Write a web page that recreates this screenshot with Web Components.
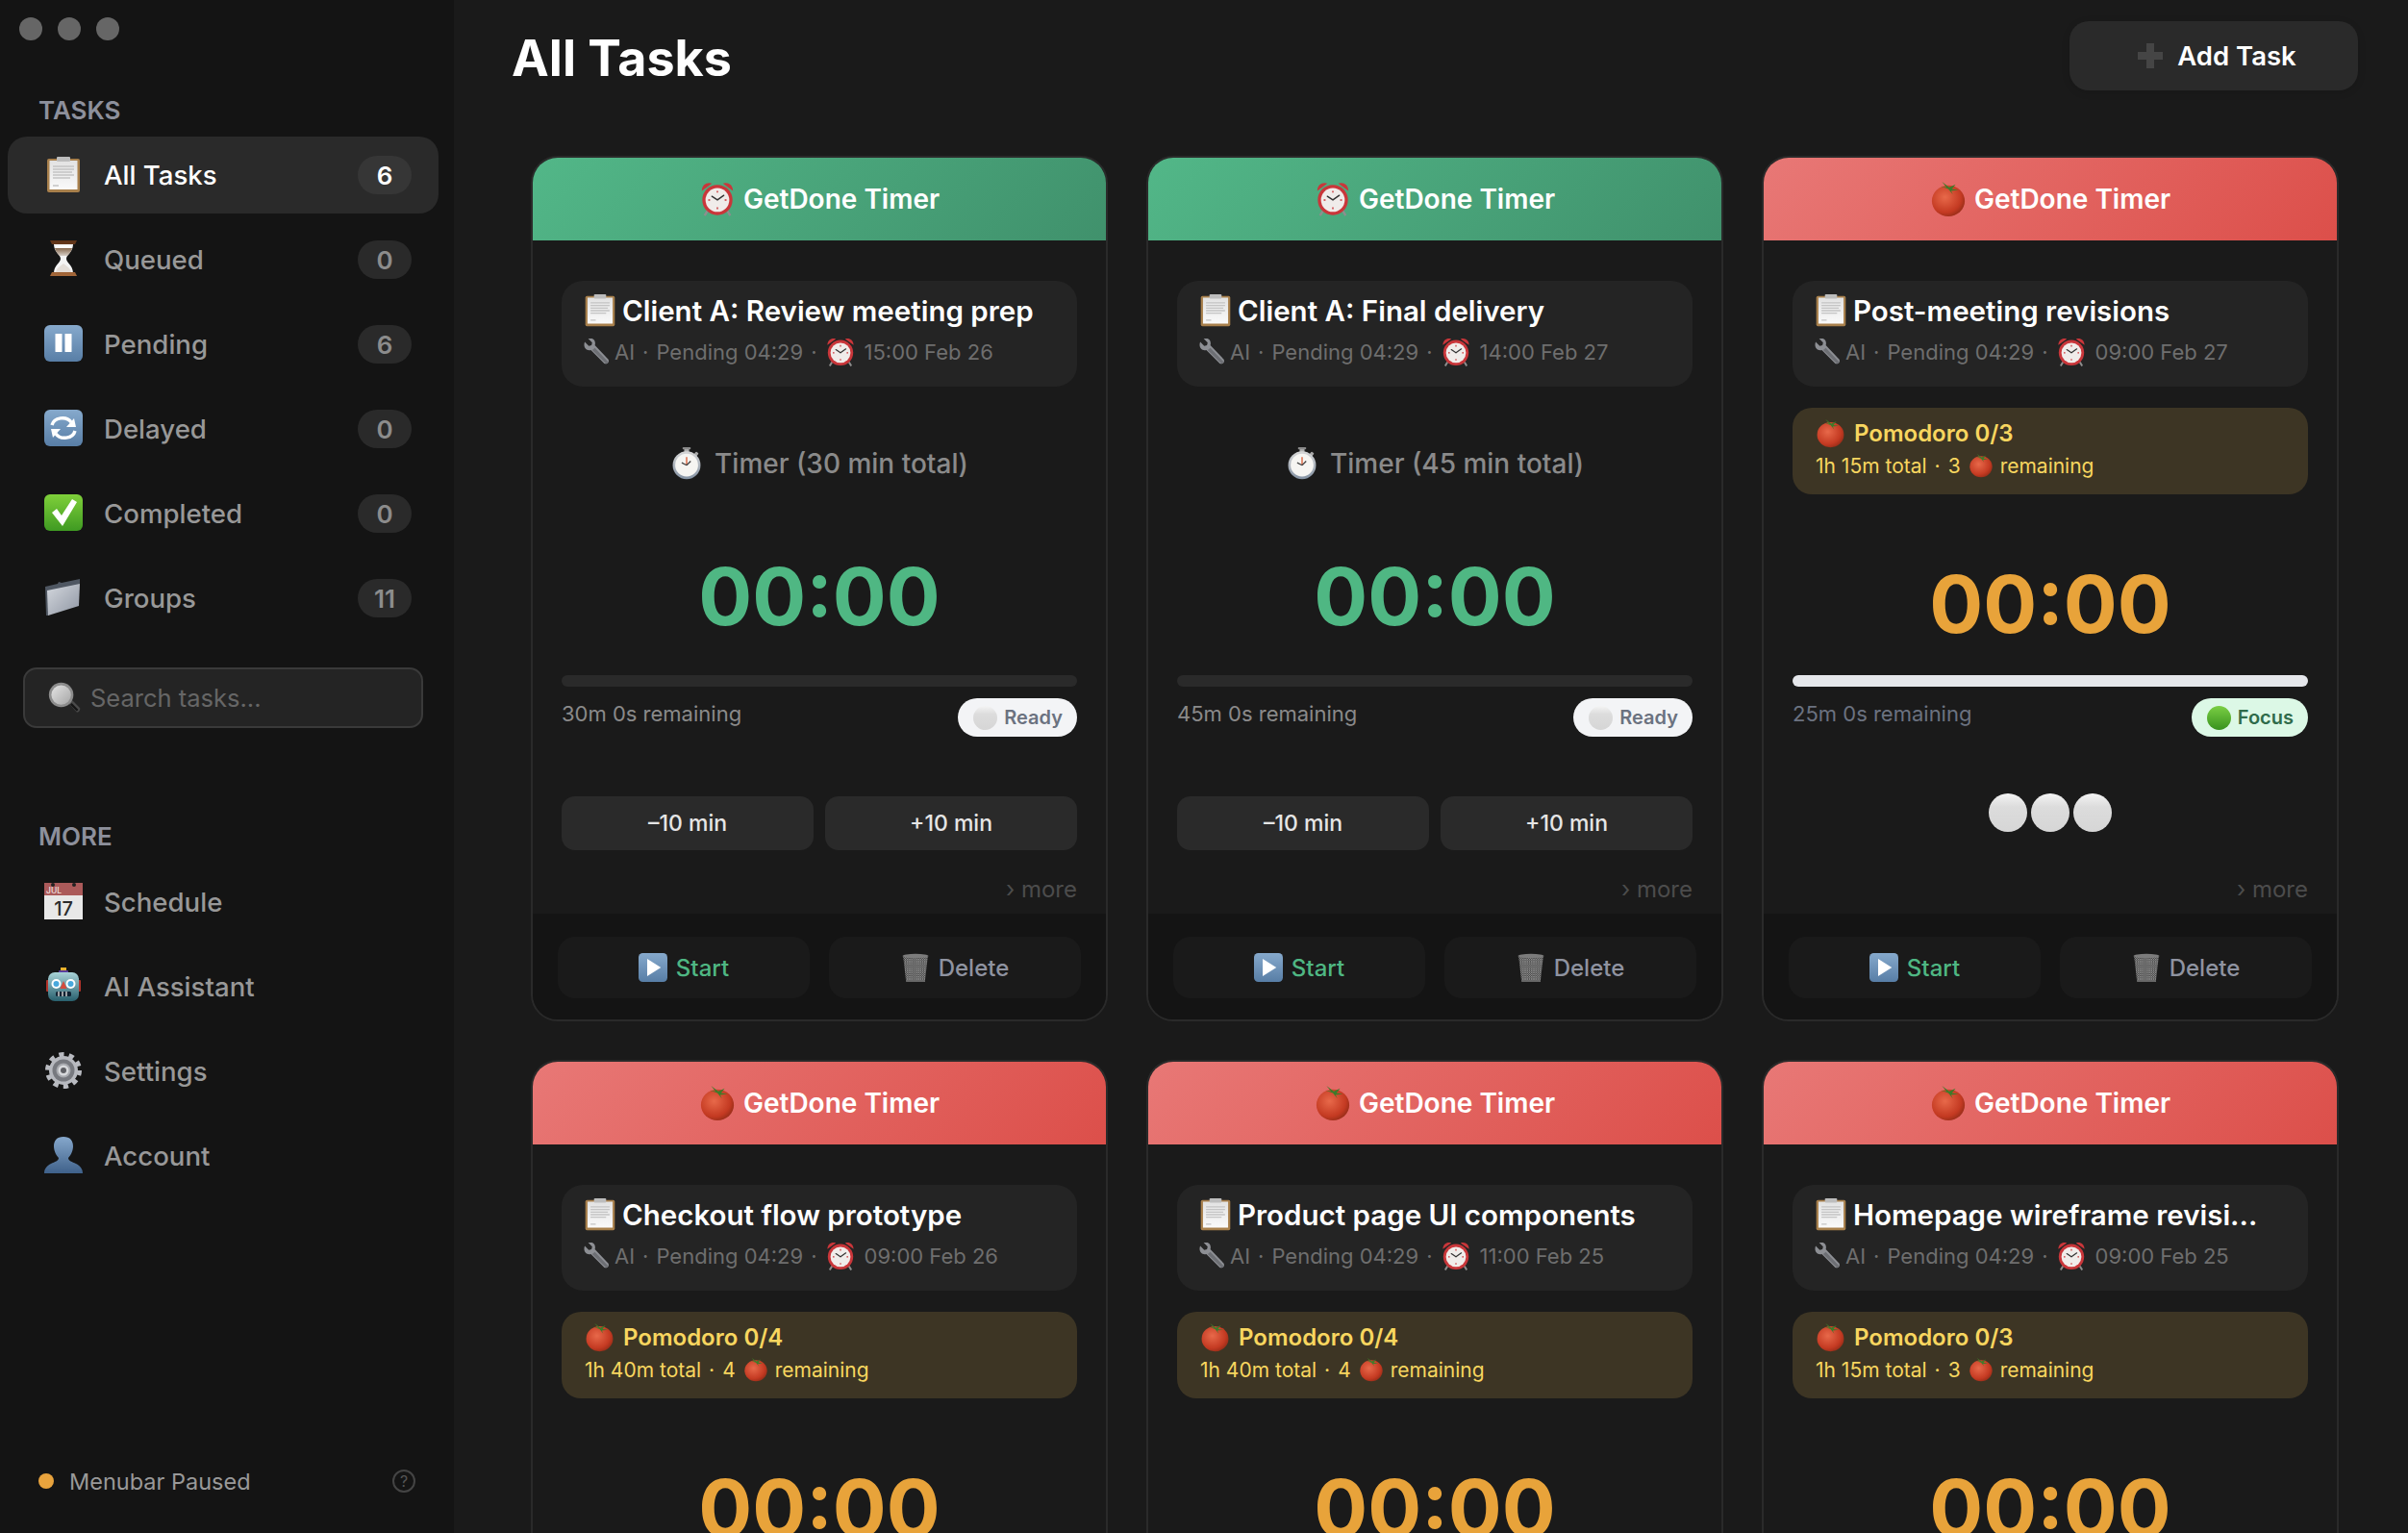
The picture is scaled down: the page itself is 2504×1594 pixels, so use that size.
<!DOCTYPE html>
<html lang="en">
<head>
<meta charset="utf-8">
<title>All Tasks</title>
<style>
  html,body{margin:0;height:100%;background:#1a1a1a;overflow:hidden}
  body{font-family:Inter,"Noto Sans","Liberation Sans",sans-serif;color:#fff}
</style>
</head>
<body>
<task-app></task-app>

<script>
// every icon is drawn on a 40x40 box
const ICONS = {
  clipboard:`<defs><linearGradient id="p" x1="0" y1="0" x2="0" y2="1"><stop offset="0" stop-color="#e2e2e2"/><stop offset="1" stop-color="#fafafa"/></linearGradient></defs>
    <rect x="3" y="3" width="34" height="35" rx="2" fill="#a8804c"/>
    <rect x="5.500" y="5" width="29" height="30" fill="url(#p)"/>
    <rect x="13" y="1" width="14" height="5" rx="1" fill="#bdbdbd"/>
    <path d="M9 11h22M9 14h22M9 17h20M9 20h22M9 23h18M9 31h6" stroke="#c4c4c4" stroke-width="1.400"/>`,
  hourglass:`<defs><linearGradient id="c" x1="0" y1="0" x2="0" y2="1"><stop offset="0" stop-color="#5e3318"/><stop offset="1" stop-color="#a5683a"/></linearGradient>
    <linearGradient id="sa" x1="0" y1="0" x2="0" y2="1"><stop offset="0" stop-color="#86684e"/><stop offset="1" stop-color="#d8d0c8"/></linearGradient></defs>
    <path d="M10 4h20c0 8-7 11-7 15s7 7 7 15H10c0-8 7-11 7-15s-7-7-7-15z" fill="#f4f4f4"/>
    <path d="M11 8h18c-1 4-3 6-5 8H16c-2-2-4-4-5-8z" fill="url(#sa)"/>
    <path d="M12 5.500h16v2.500H12z" fill="#fff"/>
    <path d="M12 33c1-5 6-7 8-9 2 2 7 4 8 9z" fill="#e4ded8"/>
    <path d="M6 0h28l-2 4H8zM6 37h28l-2-4H8z" fill="url(#c)"/>`,
  pause:`<defs><linearGradient id="b" x1="0" y1="0" x2="0" y2="1"><stop offset="0" stop-color="#86a9cc"/><stop offset="1" stop-color="#587ea6"/></linearGradient></defs>
    <rect width="40" height="38" y="0" rx="6" fill="url(#b)"/>
    <rect x="11.500" y="9" width="7" height="19" rx=".5" fill="#fff"/><rect x="21.500" y="9" width="7" height="19" rx=".5" fill="#fff"/>`,
  cycle:`<defs><linearGradient id="b" x1="0" y1="0" x2="0" y2="1"><stop offset="0" stop-color="#86a9cc"/><stop offset="1" stop-color="#587ea6"/></linearGradient></defs>
    <rect width="40" height="38" rx="6" fill="url(#b)"/>
    <path d="M8 16c2-8 15-10 20-3" fill="none" stroke="#fff" stroke-width="3.400"/>
    <path d="M33 18H23l8-9z" fill="#fff"/>
    <path d="M32 22c-2 8-15 10-20 3" fill="none" stroke="#fff" stroke-width="3.400"/>
    <path d="M7 20h10l-8 9z" fill="#fff"/>`,
  check:`<defs><linearGradient id="g" x1="0" y1="0" x2="0" y2="1"><stop offset="0" stop-color="#7fd03a"/><stop offset="1" stop-color="#3f9a22"/></linearGradient></defs>
    <rect width="40" height="38" rx="6" fill="url(#g)"/>
    <path d="M8 19l5-4 5 7L29 5l5 3-15 25z" fill="#fff"/>`,
  folder:`<defs><linearGradient id="f" x1="0" y1="0" x2="1" y2="1"><stop offset="0" stop-color="#d4d8de"/><stop offset="1" stop-color="#8f96a3"/></linearGradient></defs>
    <path d="M1 8l13-3 1-2 3 1 19-4v5L4 38H2z" fill="#4f5762"/>
    <path d="M3 12l34-7-1 23L4 38z" fill="url(#f)"/>`,
  search:`<defs><linearGradient id="l" x1="0" y1="0" x2="1" y2="1"><stop offset="0" stop-color="#e4e4e4"/><stop offset="1" stop-color="#a5a5a5"/></linearGradient></defs>
    <path d="M24 25l4-4 11 11c1 2-2 6-4 5z" fill="#4a4a4a"/>
    <path d="M29 26l8 8-2 2-8-8z" fill="#151515"/>
    <circle cx="16" cy="16" r="15" fill="#8c8c8c"/>
    <circle cx="16" cy="16" r="12" fill="url(#l)"/>`,
  calendar:`<rect y="0" width="40" height="38" fill="#e8e8e8"/>
    <rect width="40" height="13" fill="#ab5a5a"/>
    <circle cx="9" cy="2" r="2" fill="#222"/><circle cx="31" cy="2" r="2" fill="#222"/>
    <text x="2" y="11" font-size="8.500" font-weight="500" fill="#f0e0e0" font-family="Inter,sans-serif">JUL</text>
    <text x="20" y="33.500" text-anchor="middle" font-size="20" fill="#2c2c2c" font-family="Inter,sans-serif">17</text>`,
  robot:`<defs><linearGradient id="r" x1="0" y1="0" x2="0" y2="1"><stop offset="0" stop-color="#a9d3d8"/><stop offset="1" stop-color="#28606e"/></linearGradient></defs>
    <rect x="17" y="0" width="6" height="3" fill="#eab12e"/><rect x="15" y="3" width="10" height="3" rx="1" fill="#5a3f9c"/>
    <rect x="2" y="13" width="4" height="12" rx="1" fill="#b2332a"/><rect x="34" y="13" width="4" height="12" rx="1" fill="#b2332a"/>
    <rect x="4" y="5" width="32" height="30" rx="7" fill="url(#r)"/>
    <circle cx="12.500" cy="17" r="5" fill="#fff"/><circle cx="12.500" cy="17" r="3" fill="#48a8dd"/>
    <circle cx="27.500" cy="17" r="5" fill="#fff"/><circle cx="27.500" cy="17" r="3" fill="#48a8dd"/>
    <path d="M20 14l3.500 8h-7z" fill="#d64a3c"/>
    <rect x="12" y="25" width="16" height="5" rx="1.500" fill="#123"/>
    <path d="M15 25v5M19 25v5M23 25v5" stroke="#ccc" stroke-width="1.500"/>`,
  gear:`<circle cx="20" cy="19" r="16.500" fill="none" stroke="#b9bbc1" stroke-width="5" stroke-dasharray="5.200 5.170"/>
    <circle cx="20" cy="19" r="15" fill="#b7b9bf"/><circle cx="20" cy="19" r="11.500" fill="#77797f"/>
    <circle cx="20" cy="19" r="7.500" fill="#a7a9ae"/><circle cx="20" cy="19" r="5.500" fill="#d8d9dc"/><circle cx="20" cy="19" r="3" fill="#5f6065"/>`,
  person:`<defs><linearGradient id="u" x1="0" y1="0" x2="0" y2="1"><stop offset="0" stop-color="#86a8cc"/><stop offset="1" stop-color="#3f618a"/></linearGradient></defs>
    <path d="M20 0c7 0 10 4 10 10 0 5-3 10-5 12 0 3 4 4 8 6s7 5 7 10H0c0-5 3-8 7-10s8-3 8-6c-2-2-5-7-5-12C10 4 13 0 20 0z" fill="url(#u)"/>`,
  alarm:`<path d="M3 11C3 4 9 1 14 3zM37 11c0-7-6-10-11-8z" fill="#c9363a"/>
    <path d="M9 33l-3 5M31 33l3 5" stroke="#8e8e8e" stroke-width="2.500"/>
    <circle cx="20" cy="21" r="16.500" fill="#c9363a"/><circle cx="20" cy="21" r="13" fill="#f0ecea"/>
    <path d="M20 11v2M20 29v2M10 21h2M28 21h2" stroke="#c9363a" stroke-width="1.500"/>
    <path d="M20 21l-6-4M20 21l7-5" stroke="#333" stroke-width="1.500" stroke-linecap="round"/>`,
  stopwatch:`<defs><linearGradient id="s" x1="0" y1="0" x2="0" y2="1"><stop offset="0" stop-color="#d8d8d8"/><stop offset="1" stop-color="#8492a3"/></linearGradient></defs>
    <rect x="17" y="1" width="6" height="5" fill="#b0b0b0"/><rect x="15" y="0" width="10" height="2.500" rx="1" fill="#8a8a8a"/>
    <rect x="30" y="6" width="4" height="5" rx="1" transform="rotate(40 32 8)" fill="#a8a8a8"/>
    <circle cx="20" cy="22" r="17" fill="url(#s)"/><circle cx="20" cy="22" r="14" fill="#f6f5f2"/>
    <path d="M20 22V12" stroke="#d8552e" stroke-width="1.500"/><path d="M20 22l-6-3M20 22l5-5" stroke="#444" stroke-width="1.500"/>`,
  wrench:`<path d="M3 5l6 6 4-1 1-4-6-6c7-2 12 3 10 10l20 21c2 4-2 8-6 6L12 17C5 19 0 12 3 5z" fill="#8d8f94"/>
    <path d="M18 14l20 21-3 3-21-21z" fill="#6d6f74"/>`,
  tomato:`<defs><radialGradient id="t" cx=".4" cy=".38" r=".7"><stop offset="0" stop-color="#e8694a"/><stop offset=".7" stop-color="#c43a22"/><stop offset="1" stop-color="#8e2a16"/></radialGradient></defs>
    <ellipse cx="20" cy="22" rx="18" ry="17" fill="url(#t)"/>
    <path d="M20 9l-8-3 6 1-5-6 8 6 7-3-4 5 7 1-8 1 2 4z" fill="#3f7a2a"/>`,
  play:`<defs><linearGradient id="b" x1="0" y1="0" x2="0" y2="1"><stop offset="0" stop-color="#86a9cc"/><stop offset="1" stop-color="#587ea6"/></linearGradient></defs>
    <rect width="40" height="40" rx="6" fill="url(#b)"/><path d="M12 8l19 12-19 12z" fill="#fff"/>`,
  trash:`<defs><pattern id="m" width="3" height="3" patternUnits="userSpaceOnUse"><rect width="3" height="3" fill="#3d3d3d"/><path d="M0 0l3 3M3 0L0 3" stroke="#a3a3a3" stroke-width=".8"/></pattern></defs>
    <path d="M3 5h34l-4 35H7z" fill="url(#m)"/>
    <ellipse cx="20" cy="4" rx="18" ry="3" fill="#7c7c7c"/>
    <path d="M7 38h26v2H7z" fill="#666"/>`,
  white:`<defs><linearGradient id="w" x1="0" y1="0" x2="0" y2="1"><stop offset="0" stop-color="#f4f4f4"/><stop offset=".35" stop-color="#dcdcdc"/><stop offset="1" stop-color="#d6d6d6"/></linearGradient></defs>
    <circle cx="20" cy="20" r="20" fill="url(#w)"/>`,
  green:`<defs><linearGradient id="n" x1="0" y1="0" x2="0" y2="1"><stop offset="0" stop-color="#7bcf44"/><stop offset="1" stop-color="#38921e"/></linearGradient></defs>
    <circle cx="20" cy="20" r="20" fill="url(#n)"/>`
}

class AppIcon extends HTMLElement {
  static get observedAttributes(){ return ['name','size'] }
  constructor(){
    super()
    this.attachShadow({mode:'open'})
  }
  attributeChangedCallback(){ this.render() }
  connectedCallback(){ this.render() }
  render(){
    const size = this.getAttribute('size') || 40
    this.shadowRoot.innerHTML = `
      <style>:host{display:inline-flex;flex:none;width:${size}px;height:${size}px}svg{display:block;width:100%;height:100%}</style>
      <svg viewBox="0 0 40 40" aria-hidden="true">${ICONS[this.getAttribute('name')] || ''}</svg>`
  }
}
customElements.define('app-icon', AppIcon)

const navTemplate = document.createElement('template')
navTemplate.innerHTML = `
  <style>
    :host{display:flex;align-items:center;height:80px;margin:0 16px 8px 8px;padding:0 28px 0 38px;border-radius:20px;font-size:27.600px;font-weight:500;color:#989898;box-sizing:border-box}
    :host([active]){background:#2a2a2a;color:#fff}
    .label{flex:1;margin-left:22px}
    .count{width:56px;height:40px;border-radius:20px;background:#2a2a2a;color:#8c8c8c;font-size:26px;font-weight:600;display:flex;align-items:center;justify-content:center}
    :host([active]) .count{background:#363636;color:#fff}
    :host(:not([count])) .count{display:none}
  </style>
  <app-icon></app-icon>
  <span class="label"><slot></slot></span>
  <span class="count"></span>
`
class NavItem extends HTMLElement {
  connectedCallback(){
    if(this.shadowRoot) return
    this.attachShadow({mode:'open'})
    this.shadowRoot.appendChild(navTemplate.content.cloneNode(true))
    this.shadowRoot.querySelector('app-icon').setAttribute('name', this.getAttribute('icon'))
    this.shadowRoot.querySelector('.count').textContent = this.getAttribute('count')
  }
}
customElements.define('nav-item', NavItem)

const sidebarTemplate = document.createElement('template')
sidebarTemplate.innerHTML = `
  <style>
    :host{display:flex;flex-direction:column;flex:none;width:472px;height:100%;background:#141414}
    .lights{display:flex;gap:16px;padding:18px 0 0 20px;height:24px}
    .lights i{width:24px;height:24px;border-radius:50%;background:#666}
    h2{margin:0 0 0 40px;font-size:26px;line-height:32px;font-weight:600;color:#8d909c}
    .tasks{margin-top:57px;margin-bottom:11px}
    .more{margin-top:97px;margin-bottom:12px}
    .search{display:flex;align-items:center;gap:10px;margin:24px 32px 0 24px;height:63px;padding:0 24px;box-sizing:border-box;background:#242424;border:2px solid #3a3a3a;border-radius:14px;font-size:25.500px;color:#666}
    .foot{display:flex;align-items:center;margin-top:auto;padding:0 40px 38px;height:32px;font-size:23.500px;color:#999}
    .dot{width:16px;height:16px;border-radius:50%;background:#e8a33d;margin-right:16px}
    .txt{flex:1}
    .help{width:24px;height:24px;box-sizing:border-box;border:2px solid #444;border-radius:50%;font-size:16px;line-height:20px;text-align:center;color:#555}
  </style>
  <div class="lights"><i></i><i></i><i></i></div>
  <h2 class="tasks">TASKS</h2>
  <nav-item icon="clipboard" count="6" active>All Tasks</nav-item>
  <nav-item icon="hourglass" count="0">Queued</nav-item>
  <nav-item icon="pause" count="6">Pending</nav-item>
  <nav-item icon="cycle" count="0">Delayed</nav-item>
  <nav-item icon="check" count="0">Completed</nav-item>
  <nav-item icon="folder" count="11">Groups</nav-item>
  <div class="search"><app-icon name="search" size="34"></app-icon><span>Search tasks...</span></div>
  <h2 class="more">MORE</h2>
  <nav-item icon="calendar">Schedule</nav-item>
  <nav-item icon="robot">AI Assistant</nav-item>
  <nav-item icon="gear">Settings</nav-item>
  <nav-item icon="person">Account</nav-item>
  <div class="foot"><span class="dot"></span><span class="txt">Menubar Paused</span><span class="help">?</span></div>
`
class TaskSidebar extends HTMLElement {
  constructor(){
    super()
    this.attachShadow({mode:'open'})
    this.shadowRoot.appendChild(sidebarTemplate.content.cloneNode(true))
  }
}
customElements.define('task-sidebar', TaskSidebar)

const cardTemplate = document.createElement('template')
cardTemplate.innerHTML = `
  <style>
    :host{display:flex;flex-direction:column;width:600px;height:900px;box-sizing:border-box;border:2px solid #2a2a2a;border-radius:28px;overflow:hidden;background:#1a1a1a}
    .head{height:86px;flex:none;display:flex;align-items:center;justify-content:center;gap:8px;font-size:28px;font-weight:600;color:#fff;background:linear-gradient(135deg,#52b788,#40916c)}
    :host([tone=red]) .head{background:linear-gradient(135deg,#e87876,#dc4f4a)}
    .body{flex:1;display:flex;flex-direction:column;padding:42px 30px 10px;min-height:0}
    .info{height:110px;box-sizing:border-box;background:#242424;border-radius:22px;padding:11px 22px 0}
    .name{display:flex;align-items:center;height:40px;gap:5px;font-size:29.500px;font-weight:600;color:#fff;white-space:nowrap;overflow:hidden}
    .meta{display:flex;align-items:center;height:38px;margin-top:4px;font-size:22px;color:#6e6e6e;white-space:nowrap}
    .meta .sep{margin:0 8px}
    .meta app-icon:first-child{margin-right:5px}
    .meta app-icon:nth-of-type(2){margin:0 9px 0 8px}
    .label{display:flex;align-items:center;justify-content:center;gap:12px;margin-top:62px;height:36px;font-size:28px;font-weight:500;color:#8a8a8a}
    .pomo{display:none;height:90px;box-sizing:border-box;margin-top:22px;padding:10px 24px 0;border-radius:20px;background:#3d3524;color:#f8d65f}
    .pomo-top{display:flex;align-items:center;gap:9px;height:32px;font-size:24px;font-weight:600}
    .pomo-sub{display:flex;align-items:center;height:30px;margin-top:3px;font-size:21px;white-space:nowrap}
    .pomo-sub .sep{margin:0 8px}
    .pomo-sub app-icon{margin:0 7px 0 8px}
    .time{margin-top:65px;height:110px;line-height:110px;text-align:center;font-size:83px;font-weight:700;color:#4fb783}
    .bar{margin-top:27px;height:12px;flex:none;border-radius:6px;background:#2a2a2a}
    .row{display:flex;justify-content:space-between;margin-top:12px;height:40px}
    .left{font-size:22px;line-height:32px;color:#8a8a8a}
    .pill{display:flex;align-items:center;gap:7px;height:40px;padding:0 15px 0 16px;border-radius:20px;background:#f3f4f6;color:#6b7280;font-size:20px;font-weight:600}
    .adj{display:flex;gap:12px;margin-top:62px}
    .adj div{flex:1;height:56px;border-radius:14px;background:#2a2a2a;color:#e5e5e5;font-size:23px;font-weight:500;display:flex;align-items:center;justify-content:center}
    .dots{display:none;justify-content:center;gap:4px;margin-top:59px}
    .more{margin-top:auto;height:30px;line-height:30px;text-align:right;font-size:24px;color:#4c4c4c}
    .foot{height:110px;flex:none;box-sizing:border-box;background:#141414;display:flex;gap:20px;padding:24px 26px}
    .foot div{flex:1;height:64px;border-radius:18px;background:#1a1a1a;display:flex;align-items:center;justify-content:center;gap:9px;font-size:24px;font-weight:500;color:#8f93a0}
    .foot .start{color:#4fb783}

    :host([mode=pomodoro]) .label{display:none}
    :host([mode=pomodoro]) .pomo{display:block}
    :host([mode=pomodoro]) .time{margin-top:59px;color:#e8a33a}
    :host([mode=pomodoro]) .bar{margin-top:19px}
    :host([mode=pomodoro]) .left{color:#6b7280}
    :host([focus]) .bar{background:#e5e7eb}
    :host([focus]) .pill{background:#dcf8e6;color:#2f6b4a}
    :host([focus]) .adj{display:none}
    :host([focus]) .dots{display:flex}
  </style>
  <div class="head"><app-icon class="head-icon" size="38"></app-icon><span>GetDone Timer</span></div>
  <div class="body">
    <div class="info">
      <div class="name"><app-icon name="clipboard" size="36"></app-icon><slot></slot></div>
      <div class="meta"><app-icon name="wrench" size="28"></app-icon><span>AI</span><span class="sep">·</span><span>Pending 04:29</span><span class="sep" style="margin-right:0">·</span><app-icon name="alarm" size="32"></app-icon><slot name="due"></slot></div>
    </div>
    <div class="label"><app-icon name="stopwatch" size="34"></app-icon><slot name="label"></slot></div>
    <div class="pomo">
      <div class="pomo-top"><app-icon name="tomato" size="31"></app-icon><slot name="pomo"></slot></div>
      <div class="pomo-sub"><slot name="total"></slot><span class="sep">·</span><slot name="left"></slot><app-icon name="tomato" size="26"></app-icon><span>remaining</span></div>
    </div>
    <div class="time">00:00</div>
    <div class="bar"></div>
    <div class="row">
      <span class="left"><slot name="remaining"></slot></span>
      <span class="pill"><app-icon class="pill-icon" size="25"></app-icon><span class="pill-text"></span></span>
    </div>
    <div class="adj"><div>–10 min</div><div>+10 min</div></div>
    <div class="dots"><app-icon name="white"></app-icon><app-icon name="white"></app-icon><app-icon name="white"></app-icon></div>
    <div class="more">› more</div>
  </div>
  <div class="foot">
    <div class="start"><app-icon name="play" size="30"></app-icon>Start</div>
    <div><app-icon name="trash" size="30"></app-icon>Delete</div>
  </div>
`
class TaskCard extends HTMLElement {
  connectedCallback(){
    if(this.shadowRoot) return
    this.attachShadow({mode:'open'})
    this.shadowRoot.appendChild(cardTemplate.content.cloneNode(true))
    const focus = this.hasAttribute('focus')
    this.shadowRoot.querySelector('.head-icon').setAttribute('name', this.getAttribute('tone') === 'red' ? 'tomato' : 'alarm')
    this.shadowRoot.querySelector('.pill-icon').setAttribute('name', focus ? 'green' : 'white')
    this.shadowRoot.querySelector('.pill-text').textContent = focus ? 'Focus' : 'Ready'
  }
}
customElements.define('task-card', TaskCard)

const appTemplate = document.createElement('template')
appTemplate.innerHTML = `
  <style>
    :host{display:flex;height:100vh;overflow:hidden}
    main{flex:1;min-width:0;background:#1a1a1a}
    header{display:flex;justify-content:space-between;align-items:flex-start;height:72px;padding:22px 52px 0 60px}
    h1{margin:3px 0 0;font-size:52px;line-height:72px;font-weight:700;color:#fff}
    .add{display:flex;align-items:center;justify-content:center;gap:15px;width:300px;height:72px;box-sizing:border-box;padding-left:7px;border-radius:20px;background:#2a2a2a;font-size:27.500px;font-weight:600;color:#fff;box-shadow:0 2px 8px rgba(0,0,0,.12)}
    .plus{position:relative;width:26px;height:26px;flex:none}
    .plus::before,.plus::after{content:"";position:absolute;background:#454545}
    .plus::before{left:9px;top:0;width:8px;height:26px}
    .plus::after{left:0;top:9px;width:26px;height:8px}
    .grid{display:grid;grid-template-columns:repeat(3,600px);gap:40px;padding:68px 72px 0 80px}
  </style>
  <task-sidebar></task-sidebar>
  <main>
    <header><h1>All Tasks</h1><div class="add"><span class="plus"></span><span>Add Task</span></div></header>
    <div class="grid"><slot></slot></div>
  </main>
`
class TaskApp extends HTMLElement {
  constructor(){
    super()
    this.attachShadow({mode:'open'})
    this.shadowRoot.appendChild(appTemplate.content.cloneNode(true))
  }
}
customElements.define('task-app', TaskApp)

const tasks = [
  {tone:'green', name:'Client A: Review meeting prep', due:'15:00 Feb 26', mins:30},
  {tone:'green', name:'Client A: Final delivery', due:'14:00 Feb 27', mins:45},
  {tone:'red', name:'Post-meeting revisions', due:'09:00 Feb 27', pomo:3, total:'1h 15m', focus:true},
  {tone:'red', name:'Checkout flow prototype', due:'09:00 Feb 26', pomo:4, total:'1h 40m'},
  {tone:'red', name:'Product page UI components', due:'11:00 Feb 25', pomo:4, total:'1h 40m'},
  {tone:'red', name:'Homepage wireframe revisi...', due:'09:00 Feb 25', pomo:3, total:'1h 15m'}
]

const app = document.querySelector('task-app')
tasks.forEach(t => {
  const card = document.createElement('task-card')
  card.setAttribute('tone', t.tone)
  card.setAttribute('mode', t.pomo ? 'pomodoro' : 'timer')
  if(t.focus) card.setAttribute('focus', '')
  card.innerHTML = `${t.name}
    <span slot="due">${t.due}</span>
    ${t.pomo
      ? `<span slot="pomo">Pomodoro 0/${t.pomo}</span><span slot="total">${t.total} total</span><span slot="left">${t.pomo}</span><span slot="remaining">25m 0s remaining</span>`
      : `<span slot="label">Timer (${t.mins} min total)</span><span slot="remaining">${t.mins}m 0s remaining</span>`}`
  app.appendChild(card)
})
</script>
</body>
</html>
